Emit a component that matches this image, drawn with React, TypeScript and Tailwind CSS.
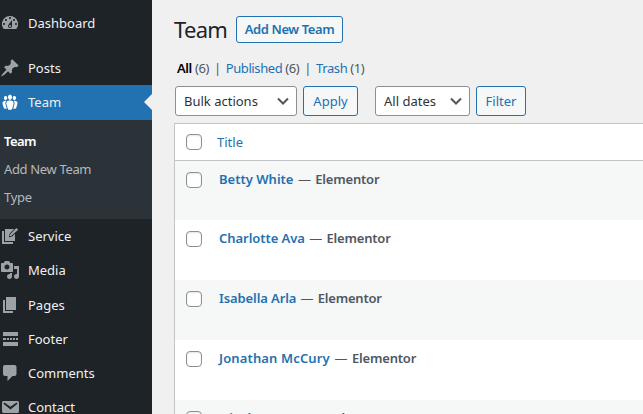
import type { ReactNode } from 'react';

function Icon({ children }: { children: ReactNode }) {
  return (
    <svg viewBox="0 0 20 20" className="size-5 fill-current">
      {children}
    </svg>
  );
}

const icons: Record<string, ReactNode> = {
  Dashboard: <path fillRule="evenodd" d="M3.76 16h12.48A7.998 7.998 0 0 0 10 3a7.998 7.998 0 0 0-6.24 13zM10 4c.55 0 1 .45 1 1s-.45 1-1 1-1-.45-1-1 .45-1 1-1zM6 6c.55 0 1 .45 1 1s-.45 1-1 1-1-.45-1-1 .45-1 1-1zm8 0c.55 0 1 .45 1 1s-.45 1-1 1-1-.45-1-1 .45-1 1-1zm-5.37 5.55L12 7v6c0 1.1-.9 2-2 2s-2-.9-2-2c0-.57.24-1.08.63-1.45zM4 10c.55 0 1 .45 1 1s-.45 1-1 1-1-.45-1-1 .45-1 1-1zm12 0c.55 0 1 .45 1 1s-.45 1-1 1-1-.45-1-1 .45-1 1-1zm-5 3c0-.55-.45-1-1-1s-1 .45-1 1 .45 1 1 1 1-.45 1-1z" />,
  Posts: <path d="M10.44 3.02l1.82-1.82 6.36 6.35-1.83 1.82c-1.05-.68-2.48-.57-3.41.36l-.75.75c-.92.93-1.04 2.35-.35 3.41l-1.83 1.82-2.41-2.41-2.8 2.79c-.42.42-3.38 2.71-3.8 2.29s1.86-3.39 2.28-3.81l2.79-2.79L4.1 9.36l1.83-1.82c1.05.69 2.48.57 3.4-.36l.75-.75c.93-.92 1.05-2.35.36-3.41z" />,
  Team: <path d="M8.03 4.46c-.29 1.28.55 3.46 1.97 3.46 1.41 0 2.25-2.18 1.96-3.46-.22-.98-1.08-1.63-1.96-1.63-.89 0-1.74.65-1.97 1.63zm-4.13.9c-.25 1.08.47 2.93 1.67 2.93s1.92-1.85 1.67-2.93c-.19-.83-.92-1.39-1.67-1.39s-1.48.56-1.67 1.39zm8.86 0c-.25 1.08.47 2.93 1.66 2.93 1.2 0 1.92-1.85 1.67-2.93-.19-.83-.92-1.39-1.67-1.39-.74 0-1.47.56-1.66 1.39zm-.59 11.43l1.25-4.3C14.2 10 12.71 8.47 10 8.47c-2.72 0-4.21 1.53-3.44 4.02l1.26 4.3C8.05 17.51 9 18 10 18c.98 0 1.94-.49 2.17-1.21zm-6.1-7.63c-.49.67-.96 1.83-.42 3.59l1.12 3.79c-.34.2-.77.31-1.2.31-.85 0-1.65-.41-1.85-1.03l-1.07-3.65c-.65-2.11.61-3.4 2.92-3.4.27 0 .54.02.79.06-.1.1-.2.22-.29.33zm8.35-.39c2.31 0 3.58 1.29 2.92 3.4l-1.07 3.65c-.2.62-1 1.03-1.85 1.03-.43 0-.86-.11-1.2-.31l1.11-3.77c.55-1.78.08-2.94-.42-3.61-.08-.11-.18-.23-.28-.33.25-.04.51-.06.79-.06z" />,
  Service: <path fillRule="evenodd" d="M5 15V3h9.200L9.800 7.600l-1 3.800 3.700-1.200L15 7.700V15zM16.300 2l1.900 1.700-6.700 6-1.800.5.5-1.900zM2 5h2v11H13v2H2z" />,
  Media: <path fillRule="evenodd" d="M13 11V4c0-.55-.45-1-1-1h-1.67L9 1H5L3.67 3H2c-.55 0-1 .45-1 1v7c0 .55.45 1 1 1h10c.55 0 1-.45 1-1zM7 4.500c1.38 0 2.500 1.120 2.500 2.500S8.380 9.500 7 9.500 4.500 8.380 4.500 7 5.620 4.500 7 4.500zM14 6h5v10.500c0 1.380-1.120 2.500-2.500 2.500S14 17.880 14 16.500s1.120-2.500 2.500-2.500c.17 0 .34.02.5.05V9h-3V6zm-4 8.050V13h2v3.500c0 1.380-1.120 2.500-2.500 2.500S7 17.880 7 16.500 8.120 14 9.500 14c.17 0 .34.02.5.05z" />,
  Pages: <path d="M6 15V2h10v13H6zm-1 1h8v2H3V5h2v11z" />,
  Footer: <path d="M3 3h15v4H3zM3 9h3v2H3zM7 9h2v2H7zM10 9h2v2h-2zM13 9h2v2h-2zM16 9h2v2h-2zM3 13h15v4H3z" />,
  Comments: <path d="M5 2h9.500c1.100 0 2 .9 2 2v7c0 1.100-.9 2-2 2h-2l-5 5v-5H5c-1.100 0-2-.9-2-2V4c0-1.100.9-2 2-2z" />,
  Contact: <path fillRule="evenodd" d="M3.87 4h13.25C18.37 4 19 4.590 19 5.790v8.420c0 1.190-.63 1.790-1.880 1.790H3.870c-1.250 0-1.880-.6-1.880-1.790V5.790c0-1.200.63-1.790 1.880-1.790zm6.620 8.600l6.740-5.530c.24-.2.430-.66.130-1.070-.29-.41-.82-.42-1.170-.17l-5.700 3.860L4.800 5.830c-.35-.25-.88-.24-1.170.17-.3.410-.11.870.13 1.070z" />,
};

function MenuItem({ name, className = '' }: { name: string; className?: string }) {
  return (
    <div className={'flex h-[34px] items-center gap-2 text-[#f0f0f1] ' + className}>
      <span className={name === 'Team' ? 'shrink-0 text-white' : 'shrink-0 text-[#9ca2a7]'}>
        <Icon>{icons[name]}</Icon>
      </span>
      <span className="leading-5">{name}</span>
    </div>
  );
}

function Checkbox() {
  return <span className="block size-4 shrink-0 rounded-[4px] border border-[#8c8f94] bg-white shadow-[inset_0_1px_2px_rgba(0,0,0,0.1)]" />;
}

function Select({ label, className }: { label: string; className: string }) {
  return (
    <div className={'flex h-[30px] items-center justify-between rounded-[3px] border border-[#8c8f94] bg-white pr-[7px] pl-2 text-[#2c3338] ' + className}>
      <span className="pt-px">{label}</span>
      <svg viewBox="0 0 12 8" className="h-2 w-3 fill-none stroke-[#555] stroke-2">
        <path d="M1 1.5l5 5 5-5" />
      </svg>
    </div>
  );
}

const button = 'flex items-center justify-center rounded-[3px] border border-[#2271b1] bg-[#f6f7f7] pt-px text-[#2271b1] ';

const rows = [
  { name: 'Betty White', className: 'h-[59px] bg-[#f6f7f7]' },
  { name: 'Charlotte Ava', className: 'h-[60px] bg-white tracking-[-0.05px]' },
  { name: 'Isabella Arla', className: 'h-[60px] bg-[#f6f7f7] tracking-[-0.1px]' },
  { name: 'Jonathan McCury', className: 'h-[60px] bg-white tracking-[0.14px]' },
  { name: 'Nicolas Barnes', className: 'h-[60px] bg-[#f6f7f7]' },
];

export default function App() {
  return (
    <div className="flex h-[414px] w-[643px] overflow-hidden bg-[#f0f0f1] font-['Noto_Sans',sans-serif] text-[13px] whitespace-nowrap">
      <aside className="w-[152px] shrink-0 bg-[#1d2327]">
        <MenuItem name="Dashboard" className="mt-[6px]" />
        <MenuItem name="Posts" className="mt-[11px]" />
        <div className="flex h-[35px] items-start justify-between bg-[#2271b1]">
          <MenuItem name="Team" />
          <svg viewBox="0 0 8 16" className="mt-[9px] h-4 w-2 fill-[#f0f0f1]"><path d="M8 0v16L0 8z" /></svg>
        </div>
        <div className="h-[99px] bg-[#2c3338] pt-[7px] pl-1 leading-7 text-[#b4b9be]">
          <div className="font-semibold tracking-[-0.6px] text-white">Team</div>
          <div className="tracking-[-0.35px]">Add New Team</div>
          <div className="tracking-[-0.3px]">Type</div>
        </div>
        <MenuItem name="Service" />
        <MenuItem name="Media" />
        <MenuItem name="Pages" className="mt-px" />
        <MenuItem name="Footer" />
        <MenuItem name="Comments" />
        <MenuItem name="Contact" />
      </aside>
      <main className="min-w-0 flex-1 pl-[22px]">
        <div className="flex h-[58px] items-center gap-[9px] text-[#1d2327]">
          <h1 className="w-[53px] text-[22px] tracking-[-0.7px]">Team</h1>
          <div className={button + 'h-[27px] w-[107px] font-semibold tracking-[-0.4px]'}>Add New Team</div>
        </div>
        <div className="flex h-[22px] items-center gap-[5px] pl-[3px] tracking-[-0.4px] text-[#50575e]">
          <span><b className="font-semibold text-black">All</b> (6)</span>
          <span>|</span>
          <span><span className="text-[#2271b1]">Published</span> (6)</span>
          <span>|</span>
          <span><span className="text-[#2271b1]">Trash</span> (1)</span>
        </div>
        <div className="mt-[6px] flex pl-px">
          <Select label="Bulk actions" className="w-[122px]" />
          <div className={button + 'ml-[6px] h-[30px] w-[55px]'}>Apply</div>
          <Select label="All dates" className="ml-[17px] w-[95px]" />
          <div className={button + 'ml-[6px] h-[30px] w-[50px]'}>Filter</div>
        </div>
        <div className="mt-[7px] border-t border-l border-[#c3c4c7] bg-white">
          <div className="flex h-[37px] items-center gap-[15px] border-b border-[#c3c4c7] pl-[11px] text-[#2271b1]">
            <Checkbox />
            <span className="pt-px">Title</span>
          </div>
          {rows.map((r) => (
            <div key={r.name} className={'flex gap-[17px] pt-[11px] pl-[11px] ' + r.className}>
              <Checkbox />
              <div className="-mt-px h-4 leading-4 font-semibold text-[#50575e]">
                <span className="text-[#2271b1]">{r.name}</span> <span className="mx-px font-normal">—</span>{' '}
                <span className="tracking-[-0.2px]">Elementor</span>
              </div>
            </div>
          ))}
        </div>
      </main>
    </div>
  );
}
